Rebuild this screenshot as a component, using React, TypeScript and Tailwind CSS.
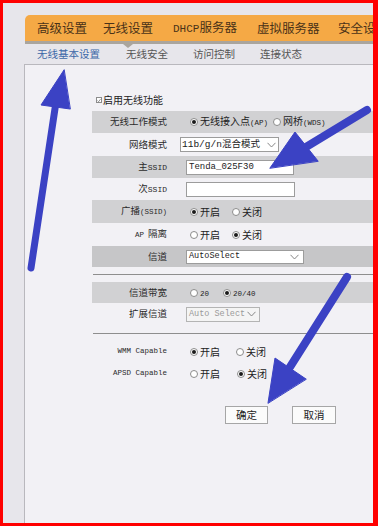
import React from "react";

const CJK = "font-['Noto_Sans_CJK_SC',sans-serif]";
const MONO = "font-['Liberation_Mono','Noto_Sans_CJK_SC',monospace]";

function Radio({ checked, children }: { checked?: boolean; children: React.ReactNode }) {
  return (
    <span className="flex items-center">
      <span className="w-[8px] h-[8px] rounded-full border border-[#8c8c8c] bg-white flex items-center justify-center shrink-0">
        {checked && <span className="w-[4px] h-[4px] rounded-full bg-[#1a1a1a]" />}
      </span>
      <span className="ml-[2px] text-[10px] leading-none text-[#222] whitespace-nowrap">{children}</span>
    </span>
  );
}

function Chevron() {
  return (
    <svg width="9" height="6" viewBox="0 0 9 6" className="shrink-0">
      <polyline points="0.5,0.8 4.5,5 8.5,0.8" fill="none" stroke="#7a7a7a" strokeWidth="0.9" />
    </svg>
  );
}

function Row({
  label,
  cls,
  children,
}: {
  label: React.ReactNode;
  cls: string;
  children: React.ReactNode;
}) {
  return (
    <div className={`flex items-center ${cls}`}>
      <div className="w-[75px] shrink-0 text-right text-[9.5px] leading-none text-[#2b2b2b] whitespace-nowrap flex justify-end items-baseline">
        {label}
      </div>
      <div className="pl-[13px] flex items-center">{children}</div>
    </div>
  );
}

const small = `${MONO} text-[7.5px]`;

export default function App() {
  return (
    <div
      className={`relative w-[378px] h-[526px] overflow-hidden border-l-[3px] border-t-[3px] border-r-[5px] border-b-[3px] border-[#ff0000] bg-[#e7e6eb] ${CJK}`}
    >
      <div className="flex flex-col h-full pl-[21px] pt-[12px]">
        {/* main tabs */}
        <div className="ml-px relative">
          <div className="h-[26px] bg-[#f5a945] rounded-tl-[5px] flex items-center pl-[12px] text-[12.5px] text-[#4a3218] whitespace-nowrap leading-none">
            <span className="w-[66px] shrink-0">高级设置</span>
            <span className="w-[70px] shrink-0">无线设置</span>
            <span className="w-[84px] shrink-0">
              <span className={`${MONO} text-[11px]`}>DHCP</span>服务器
            </span>
            <span className="w-[81px] shrink-0">虚拟服务器</span>
            <span className="shrink-0">安全设置</span>
          </div>
          <div className="h-[3px] bg-[#aaa59d]" />
          <div className="absolute left-[98px] top-[29px] w-0 h-0 border-l-[5px] border-r-[5px] border-t-[4px] border-l-transparent border-r-transparent border-t-[#aaa59d]" />
        </div>

        {/* sub tabs */}
        <div className="ml-px h-[20px] flex items-center pl-[12px] text-[10.5px] leading-none text-[#555] whitespace-nowrap">
          <span className="w-[89px] shrink-0 text-[#3c68a8]">无线基本设置</span>
          <span className="w-[67px] shrink-0">无线安全</span>
          <span className="w-[67px] shrink-0">访问控制</span>
          <span className="shrink-0">连接状态</span>
        </div>

        {/* panel */}
        <div className="flex-1 border-t border-l border-[#b9b8bd] bg-[#f2f1f5] pt-[26px]">
          <div className="ml-[67px] flex flex-col">
            <div className="h-[20px] pb-[2px] flex items-center pl-[4px]">
              <span className="w-[6px] h-[6px] border border-[#8c8c8c] bg-white flex items-center justify-center shrink-0">
                <svg width="5" height="5" viewBox="0 0 5 5">
                  <polyline points="0.6,2.6 2,4 4.4,0.8" fill="none" stroke="#555" strokeWidth="0.8" />
                </svg>
              </span>
              <span className="ml-[1px] text-[10px] leading-none text-[#222]">启用无线功能</span>
            </div>

            <Row label="无线工作模式" cls="h-[22px] bg-[#d1d1d3]">
              <div className="ml-[10px] flex items-center">
                <span className="w-[83px] flex">
                  <Radio checked>
                    无线接入点<span className={small}>(AP)</span>
                  </Radio>
                </span>
                <Radio>
                  网桥<span className={small}>(WDS)</span>
                </Radio>
              </div>
            </Row>

            <Row label="网络模式" cls="h-[23px]">
              <div className="w-[99px] h-[15px] border border-[#9c9c9c] bg-white flex items-center pl-[1px] pr-[2px] justify-between">
                <span className="text-[9.5px] leading-none text-[#222] whitespace-nowrap">
                  <span className={`${MONO} text-[9.5px]`}>11b/g/n</span>混合模式
                </span>
                <Chevron />
              </div>
            </Row>

            <Row label={<><span>主</span><span className={`${MONO} text-[8px]`}>SSID</span></>} cls="h-[22px] bg-[#d1d1d3]">
              <div className="ml-[6px] w-[108px] h-[15px] border border-[#9c9c9c] bg-white flex items-center pl-[2px]">
                <span className={`${MONO} text-[9px] leading-none text-[#222]`}>Tenda_025F30</span>
              </div>
            </Row>

            <Row label={<><span>次</span><span className={`${MONO} text-[8px]`}>SSID</span></>} cls="h-[22px]">
              <div className="ml-[6px] w-[109px] h-[15px] border border-[#9c9c9c] bg-white" />
            </Row>

            <Row label={<><span>广播</span><span className={small}>(SSID)</span></>} cls="h-[23px] bg-[#d1d1d3]">
              <div className="ml-[10px] flex items-center">
                <span className="w-[42px] flex">
                  <Radio checked>开启</Radio>
                </span>
                <Radio>关闭</Radio>
              </div>
            </Row>

            <Row label={<><span className={`${MONO} text-[7.5px] mr-[4px]`}>AP</span><span>隔离</span></>} cls="h-[23px]">
              <div className="ml-[10px] flex items-center">
                <span className="w-[42px] flex">
                  <Radio>开启</Radio>
                </span>
                <Radio checked>关闭</Radio>
              </div>
            </Row>

            <Row label="信道" cls="h-[21px] bg-[#c6c6c8]">
              <div className="ml-[6px] w-[118px] h-[14px] border border-[#9c9c9c] bg-white flex items-center pl-[2px] pr-[4px] justify-between">
                <span className={`${MONO} text-[8.5px] leading-none text-[#222]`}>AutoSelect</span>
                <Chevron />
              </div>
            </Row>

            <div className="h-[7px]" />
            <div className="h-px bg-[#8e8e8e] ml-px" />
            <div className="h-[7px]" />

            <Row label="信道带宽" cls="h-[21px] bg-[#d1d1d3]">
              <div className="ml-[10px] flex items-center">
                <span className="w-[33px] flex">
                  <Radio checked={false}>
                    <span className={small}>20</span>
                  </Radio>
                </span>
                <Radio checked>
                  <span className={small}>20/40</span>
                </Radio>
              </div>
            </Row>

            <Row label="扩展信道" cls="h-[22px]">
              <div className="ml-[6px] w-[74px] h-[15px] border border-[#b4b4b4] bg-[#f4f4f4] flex items-center pl-[2px] pr-[3px] justify-between">
                <span className={`${MONO} text-[8.5px] leading-none text-[#9a9a9a] whitespace-nowrap`}>Auto Select</span>
                <Chevron />
              </div>
            </Row>

            <div className="h-[8px]" />
            <div className="h-px bg-[#8e8e8e] ml-px" />
            <div className="h-[7px]" />

            <Row label={<span className={small}>WMM Capable</span>} cls="h-[22px]">
              <div className="ml-[10px] flex items-center">
                <span className="w-[46px] flex">
                  <Radio checked>开启</Radio>
                </span>
                <Radio>关闭</Radio>
              </div>
            </Row>

            <Row label={<span className={small}>APSD Capable</span>} cls="h-[22px]">
              <div className="ml-[10px] flex items-center">
                <span className="w-[47px] flex">
                  <Radio>开启</Radio>
                </span>
                <Radio checked>关闭</Radio>
              </div>
            </Row>

            <div className="mt-[21px] ml-[133px] flex gap-[24px]">
              <button className="w-[43px] h-[18px] border border-[#a6a6a6] bg-[#fbfbfb] text-[10.5px] leading-none text-[#222] flex items-center justify-center">
                确定
              </button>
              <button className="w-[44px] h-[18px] border border-[#a6a6a6] bg-[#fbfbfb] text-[10.5px] leading-none text-[#222] flex items-center justify-center">
                取消
              </button>
            </div>
          </div>
        </div>
      </div>

      {/* annotation arrows */}
      <svg
        className="absolute -left-[3px] -top-[3px] pointer-events-none"
        width="378"
        height="526"
        viewBox="0 0 378 526"
      >
        <g fill="#3b42c4" stroke="#3b42c4" strokeLinecap="round" strokeLinejoin="round">
          <line x1="31" y1="268" x2="56" y2="102" strokeWidth="7" />
          <polygon points="64,70 41,105 70,109" strokeWidth="1" />
          <line x1="367" y1="110" x2="306" y2="147" strokeWidth="8" />
          <polygon points="270,168 295,132 318,161" strokeWidth="1" />
          <line x1="347" y1="277" x2="290" y2="367" strokeWidth="8" />
          <polygon points="268,403 275,358 306,379" strokeWidth="1" />
        </g>
      </svg>
    </div>
  );
}
